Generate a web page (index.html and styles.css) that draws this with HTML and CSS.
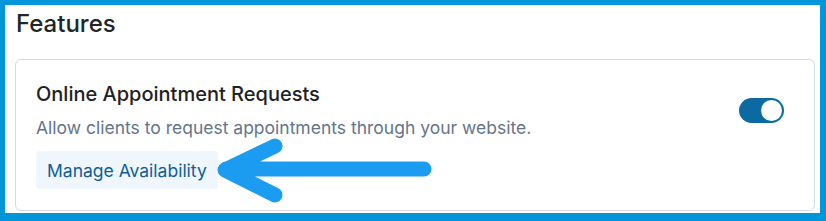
FILE: index.html
```html
<!DOCTYPE html>
<html lang="en">
<head>
    <meta charset="UTF-8">
    <meta name="viewport" content="width=device-width, initial-scale=1.0">
    <title>Features</title>
    <link rel="stylesheet" href="styles.css">
</head>
<body>
    <div class="frame">
        <h2 class="section-title">Features</h2>

        <div class="feature-card">
            <div class="feature-info">
                <h3 class="feature-name">Online Appointment Requests</h3>
                <p class="feature-desc">Allow clients to request appointments through your website.</p>
                <button class="manage-btn">Manage Availability</button>
            </div>
            <label class="switch">
                <input type="checkbox" checked>
                <span class="slider"></span>
            </label>
        </div>
    </div>

    <!-- annotation arrow pointing at the button -->
    <svg class="callout" width="826" height="221" viewBox="0 0 826 221">
        <path d="M424 169 H226 M275 146 L225 170 L275 195" fill="none" stroke="#1c9cf0" stroke-width="15" stroke-linecap="round" stroke-linejoin="round"/>
    </svg>
</body>
</html>
```

FILE: styles.css
```css
body {
    margin: 0;
    font-family: Inter, "Noto Sans", sans-serif;
    background-color: #0096d9;
    position: relative;
    width: 826px;
    height: 221px;
    overflow: hidden;
}
.frame {
    box-sizing: border-box;
    margin: 5px 6px 8px 5px;
    height: 208px;
    background-color: white;
    padding: 0 5px 0 10px;
}
.section-title {
    margin: 0;
    padding: 3px 0 0 1px;
    height: 54px;
    font-size: 24px;
    font-weight: 500;
    line-height: 32px;
    color: #212529;
    box-sizing: border-box;
}
.feature-card {
    display: flex;
    align-items: flex-start;
    justify-content: space-between;
    border: 1px solid #d3dae3;
    border-radius: 6px;
    padding: 20px 30px 20px 20px;
    height: 152px;
    box-sizing: border-box;
}
.feature-name {
    margin: 0;
    font-size: 20px;
    font-weight: 500;
    line-height: 28px;
    color: #1e2125;
}
.feature-desc {
    margin: 8px 0 11px;
    font-size: 17.5px;
    line-height: 24px;
    color: #64748b;
}
.manage-btn {
    font-family: inherit;
    font-size: 17.5px;
    color: #0b5e97;
    background-color: #eff6fe;
    border: none;
    border-radius: 4px;
    padding: 0 11px;
    height: 38px;
    cursor: pointer;
}
.switch {
    position: relative;
    display: inline-block;
    width: 45px;
    height: 25px;
    margin-top: 18px;
}
.switch input {
    display: none;
}
.slider {
    position: absolute;
    inset: 0;
    background-color: #0a6aa1;
    border-radius: 13px;
}
.slider::before {
    content: "";
    position: absolute;
    width: 21px;
    height: 21px;
    top: 2px;
    right: 2px;
    background-color: white;
    border-radius: 50%;
}
.callout {
    position: absolute;
    left: 0;
    top: 0;
    pointer-events: none;
}
```
